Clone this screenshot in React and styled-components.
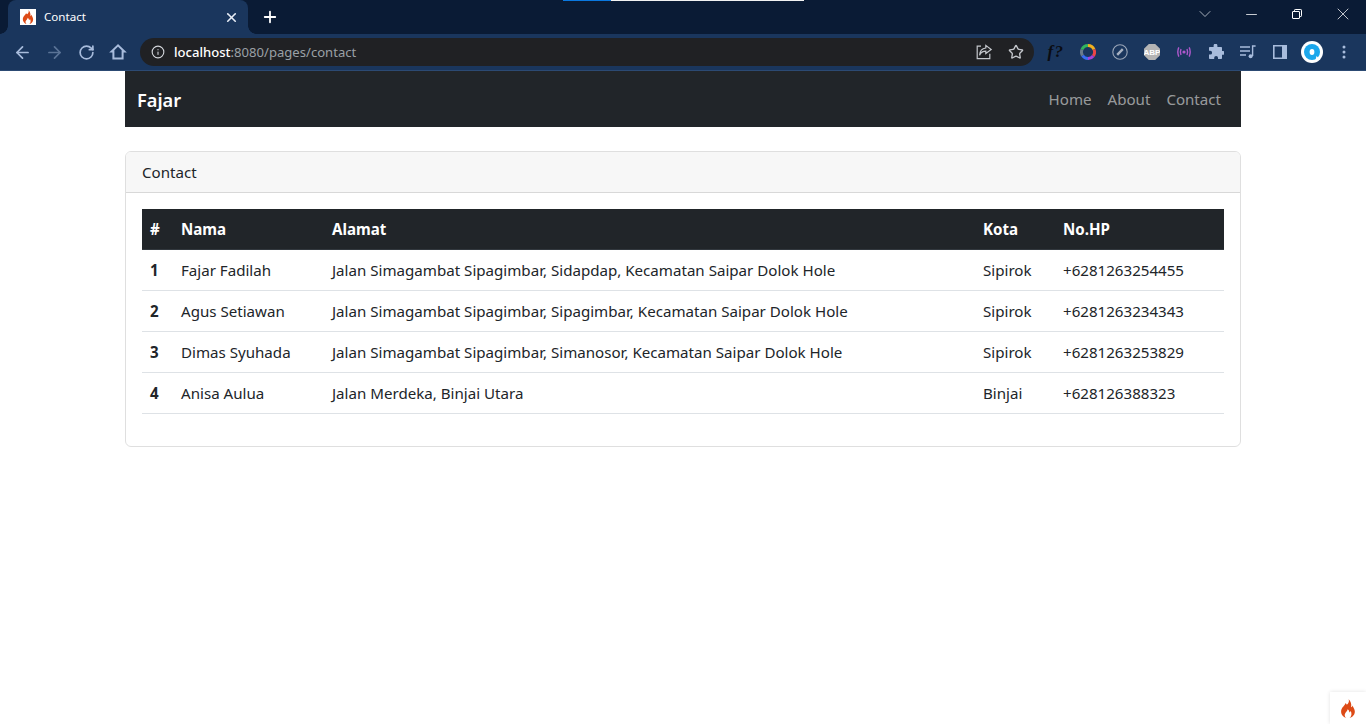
import React from "react";
import styled, { createGlobalStyle } from "styled-components";
import { ArrowLeft, ArrowRight, RotateCw, Info, Star, X, Plus, ChevronDown, Minus } from "lucide-react";

const Global = createGlobalStyle`
  html, body { margin: 0; padding: 0; background: #fff; }
  body { font-family: "Noto Sans", "Open Sans", sans-serif; color: #212529; }
  * { box-sizing: border-box; }
`;

const Shell = styled.div`
  position: relative;
  width: 1366px;
  height: 724px;
  overflow: hidden;
  background: #fff;
`;

const LoadStrip = styled.div`
  position: absolute;
  left: 563px;
  top: 0;
  display: flex;
  height: 1px;
  z-index: 2;
`;
const LoadPart = styled.div`
  width: ${(p) => p.$w}px;
  background: ${(p) => p.$c};
`;

const TabStrip = styled.div`
  display: flex;
  align-items: stretch;
  height: 34px;
  background: #0a1b35;
  padding-left: 8px;
`;

const Tab = styled.div`
  position: relative;
  display: flex;
  align-items: center;
  width: 240px;
  padding: 0 9px 0 12px;
  background: #1a365d;
  border-radius: 8px 8px 0 0;
  &::before, &::after {
    content: "";
    position: absolute;
    bottom: 0;
    width: 8px;
    height: 8px;
  }
  &::before { left: -8px; background: radial-gradient(circle at 0 0, #0a1b35 7.5px, #1a365d 8px); }
  &::after { right: -8px; background: radial-gradient(circle at 100% 0, #0a1b35 7.5px, #1a365d 8px); }
`;

const Favicon = styled.span`
  display: flex;
  align-items: center;
  justify-content: center;
  width: 16px;
  height: 16px;
  background: #fff;
  margin-right: 8px;
`;

const TabTitle = styled.span`
  flex: 1;
  color: #fff;
  font-size: 11.6px;
  line-height: 15px;
  margin-top: -1px;
`;

const TabClose = styled.span`
  display: flex;
  color: #e8eef7;
`;

const NewTab = styled.span`
  display: flex;
  align-items: center;
  justify-content: center;
  width: 28px;
  margin-left: 8px;
  color: #fff;
`;

const WindowControls = styled.div`
  margin-left: auto;
  display: flex;
  align-items: flex-start;
`;

const WindowButton = styled.span`
  display: flex;
  align-items: center;
  justify-content: center;
  width: 46px;
  height: 28px;
  color: #fff;
`;

const Toolbar = styled.div`
  display: flex;
  align-items: flex-start;
  height: 37px;
  padding: 4px 6px 0;
  background: #1a365d;
  border-bottom: 1px solid #2c4a73;
`;

const ToolButton = styled.span`
  display: flex;
  align-items: center;
  justify-content: center;
  flex: none;
  width: 32px;
  height: 28px;
  color: ${(p) => p.$c || "#a8bcdc"};
`;

const Omnibox = styled.div`
  flex: 1;
  display: flex;
  align-items: center;
  height: 28px;
  margin: 0 6px;
  padding-left: 11px;
  padding-right: 2px;
  border-radius: 14px;
  background: #202124;
  color: #d4d7dc;
`;

const Url = styled.span`
  flex: 1;
  margin-left: 9px;
  font-size: 13.1px;
  color: #9aa0a6;
  white-space: nowrap;
`;

const Host = styled.span`
  color: #fff;
  font-weight: 500;
`;

const FxMark = styled.span`
  font-family: "Liberation Serif", serif;
  font-style: italic;
  font-weight: 700;
  font-size: 17px;
  letter-spacing: 1.5px;
  color: #0a0c12;
`;

const Container = styled.main`
  width: 1116px;
  margin: 0 auto;
`;

const Navbar = styled.nav`
  display: flex;
  align-items: center;
  justify-content: space-between;
  height: 56px;
  padding: 0 12px;
  background: #212529;
`;

const Brand = styled.span`
  font-size: 18.2px;
  line-height: 28px;
  padding-top: 2px;
  font-weight: 600;
  color: #fff;
`;

const NavLinks = styled.div`
  display: flex;
`;

const NavLink = styled.span`
  padding: 0 8px;
  font-size: 15.1px;
  line-height: 24px;
  color: rgba(255, 255, 255, 0.55);
`;

const Card = styled.section`
  margin-top: 24px;
  border: 1px solid rgba(0, 0, 0, 0.125);
  border-radius: 6px;
  overflow: hidden;
`;

const CardHeader = styled.header`
  height: 41px;
  padding: 8px 16px;
  font-size: 15.1px;
  line-height: 24px;
  background: #f7f7f7;
  border-bottom: 1px solid rgba(0, 0, 0, 0.125);
`;

const CardBody = styled.div`
  padding: 16px 16px 32px;
`;

const Table = styled.table`
  width: 100%;
  border-collapse: separate;
  border-spacing: 0;
  table-layout: fixed;
  font-size: 15.12px;
`;

const HeadCell = styled.th`
  width: ${(p) => p.$w}px;
  height: 41px;
  padding: 8px;
  text-align: left;
  line-height: 24px;
  font-weight: 700;
  color: #fff;
  background: #212529;
  border-bottom: 1px solid #32383e;
`;

const RowHead = styled.th`
  height: 41px;
  padding: 8px;
  text-align: left;
  line-height: 24px;
  font-weight: 700;
  border-bottom: 1px solid #dee2e6;
`;

const Cell = styled.td`
  height: 41px;
  padding: 8px;
  line-height: 24px;
  white-space: nowrap;
  border-bottom: 1px solid #dee2e6;
`;

const DebugBadge = styled.div`
  position: absolute;
  right: 0;
  bottom: 0;
  width: 36px;
  height: 32px;
  display: flex;
  align-items: flex-start;
  justify-content: center;
  padding-top: 7px;
  background: #fff;
  box-shadow: 0 0 4px rgba(0, 0, 0, 0.12);
`;

const Flame = ({ size = 16 }) => (
  <svg width={size} height={size * 1.2} viewBox="0 0 16 19.2">
    <path
      fillRule="evenodd"
      fill="#dd4a16"
      d="M8.6 0.2 C9.6 2.6 8.4 4.2 6.8 5.8 C6.6 4.9 6.1 4.4 5.2 4.2 C5.6 6.2 1.4 8 1.1 12 C0.9 15.4 3.2 18 6.2 19 C4.6 17.6 4.2 15.8 5.4 14 C6.3 12.8 7.4 11.9 7.7 10.3 C9 11.2 9.4 12.4 9.2 13.4 C10 13.2 10.5 12.6 10.7 12 C11.9 14.4 11.8 17.2 9.6 19 C13 18 15.1 15.3 14.8 12 C14.5 9.8 13.3 8.4 12.6 6.4 C12.3 7.4 11.9 7.9 11.1 8.2 C11.8 5 10.6 1.8 8.6 0.2 Z"
    />
  </svg>
);

const HomeIcon = () => (
  <svg width="18" height="18" viewBox="0 0 18 18" fill="none" stroke="#a8bcdc" strokeWidth="2">
    <path d="M9 2.4L2.6 8.6H4.4V15.6H13.6V8.6H15.4Z" strokeLinejoin="miter" />
  </svg>
);

const ShareIcon = () => (
  <svg width="18" height="18" viewBox="0 0 18 18" fill="none" stroke="#c4c7cc" strokeWidth="1.2">
    <path d="M6 3.2H2.2V15.7H14.8V10.8" />
    <path d="M10.8 2.4L16.2 6.6L10.8 10.6V8.2C7.8 8.2 5.8 9.4 4.6 12.2C4.8 8.4 7 5.4 10.8 5Z" />
  </svg>
);

const WheelIcon = () => (
  <svg width="16" height="16" viewBox="0 0 16 16" fill="none" strokeWidth="3">
    <path d="M8 1.5A6.5 6.5 0 0 1 14 5.5" stroke="#f2b01e" />
    <path d="M14 5.5A6.5 6.5 0 0 1 13.2 12" stroke="#ec4646" />
    <path d="M13.2 12A6.5 6.5 0 0 1 8 14.5" stroke="#a541d8" />
    <path d="M8 14.5A6.5 6.5 0 0 1 2.5 11.5" stroke="#3a6cf2" />
    <path d="M2.5 11.5A6.5 6.5 0 0 1 2 5.5" stroke="#6a7b8c" />
    <path d="M2 5.5A6.5 6.5 0 0 1 8 1.5" stroke="#32b45e" />
  </svg>
);

const CompassIcon = () => (
  <svg width="16" height="16" viewBox="0 0 16 16" fill="none">
    <circle cx="8" cy="8" r="7.2" stroke="#9aa6b8" strokeWidth="1.1" />
    <path d="M5.2 10.8L10.8 5.2" stroke="#a8b2c2" strokeWidth="2.4" />
  </svg>
);

const AbpIcon = () => (
  <svg width="16" height="16" viewBox="0 0 16 16">
    <path fill="#b4b4b4" d="M4.8 0H11.2L16 4.8V11.2L11.2 16H4.8L0 11.2V4.8Z" />
    <text x="8" y="10.9" textAnchor="middle" fontSize="8" fontWeight="700" fontFamily="Liberation Sans, sans-serif" fill="#fff">ABP</text>
  </svg>
);

const RadioIcon = () => (
  <svg width="16" height="12" viewBox="0 0 16 12" fill="none" stroke="#ae58cc" strokeWidth="1.4">
    <circle cx="8" cy="6" r="1.6" fill="#ae58cc" stroke="none" />
    <path d="M5 3Q3.8 6 5 9" />
    <path d="M11 3Q12.2 6 11 9" />
    <path d="M2.8 1.4Q0.8 6 2.8 10.6" />
    <path d="M13.2 1.4Q15.2 6 13.2 10.6" />
  </svg>
);

const PuzzleIcon = () => (
  <svg width="16" height="16" viewBox="0 0 16 16">
    <path fill="#a8bcdc" d="M5.6 1.6A1.9 1.9 0 0 1 9.4 1.6V3H13.2A0.8 0.8 0 0 1 14 3.8V7H15A1.9 1.9 0 0 1 15 10.8H14V14.2A0.8 0.8 0 0 1 13.2 15H10V13.8A1.9 1.9 0 0 0 6.2 13.8V15H1.8A0.8 0.8 0 0 1 1 14.2V10.6H2.2A1.9 1.9 0 0 0 2.2 6.8H1V3.8A0.8 0.8 0 0 1 1.8 3H5.6Z" />
  </svg>
);

const QueueIcon = () => (
  <svg width="16" height="14" viewBox="0 0 16 14" fill="none" stroke="#a8bcdc" strokeWidth="1.4">
    <path d="M0 2H10M0 6H10M0 10H6" />
    <path d="M12.6 11V1H15.6" />
    <circle cx="10.6" cy="11.2" r="2" fill="#a8bcdc" stroke="none" />
  </svg>
);

const SidebarIcon = () => (
  <svg width="14" height="14" viewBox="0 0 14 14">
    <path fill="#a8bcdc" fillRule="evenodd" d="M0 0H14V14H0ZM1.6 1.6V12.4H9V1.6Z" />
  </svg>
);

const AvatarIcon = () => (
  <svg width="22" height="22" viewBox="0 0 22 22">
    <circle cx="11" cy="11" r="11" fill="#fff" />
    <circle cx="11" cy="11" r="8" fill="#1ba7ec" />
    <ellipse cx="11" cy="11" rx="2.4" ry="3" fill="#fff" />
    <path d="M15.5 15L19.5 19H14.5Z" fill="#fff" />
  </svg>
);

const DotsIcon = () => (
  <svg width="4" height="14" viewBox="0 0 4 14" fill="#a8bcdc">
    <circle cx="2" cy="2" r="1.5" />
    <circle cx="2" cy="7" r="1.5" />
    <circle cx="2" cy="12" r="1.5" />
  </svg>
);

const RestoreIcon = () => (
  <svg width="10" height="10" viewBox="0 0 10 10" fill="none" stroke="#fff" strokeWidth="1">
    <rect x="0.5" y="2.5" width="7" height="7" rx="0.5" />
    <path d="M2.5 2.5V1.2Q2.5 0.5 3.2 0.5H8.8Q9.5 0.5 9.5 1.2V6.8Q9.5 7.5 8.8 7.5H7.5" />
  </svg>
);

const rows = [
  ["1", "Fajar Fadilah", "Jalan Simagambat Sipagimbar, Sidapdap, Kecamatan Saipar Dolok Hole", "Sipirok", "+6281263254455"],
  ["2", "Agus Setiawan", "Jalan Simagambat Sipagimbar, Sipagimbar, Kecamatan Saipar Dolok Hole", "Sipirok", "+6281263234343"],
  ["3", "Dimas Syuhada", "Jalan Simagambat Sipagimbar, Simanosor, Kecamatan Saipar Dolok Hole", "Sipirok", "+6281263253829"],
  ["4", "Anisa Aulua", "Jalan Merdeka, Binjai Utara", "Binjai", "+628126388323"],
];

export default function App() {
  return (
    <Shell>
      <Global />
      <LoadStrip>
        <LoadPart $w={48} $c="#0a78e0" />
        <LoadPart $w={193} $c="#f2f2f2" />
      </LoadStrip>
      <TabStrip>
        <Tab>
          <Favicon><Flame size={12} /></Favicon>
          <TabTitle>Contact</TabTitle>
          <TabClose><X size={15} strokeWidth={2.6} /></TabClose>
        </Tab>
        <NewTab><Plus size={18} strokeWidth={2.4} /></NewTab>
        <WindowControls>
          <WindowButton><ChevronDown size={20} strokeWidth={0.9} color="#d8dde6" /></WindowButton>
          <WindowButton><Minus size={17} strokeWidth={1.1} /></WindowButton>
          <WindowButton><RestoreIcon /></WindowButton>
          <WindowButton><X size={20} strokeWidth={0.9} /></WindowButton>
        </WindowControls>
      </TabStrip>
      <Toolbar>
        <ToolButton><ArrowLeft size={19} strokeWidth={2.2} /></ToolButton>
        <ToolButton $c="#5a7396"><ArrowRight size={19} strokeWidth={2.2} /></ToolButton>
        <ToolButton><RotateCw size={17} strokeWidth={2.4} /></ToolButton>
        <ToolButton><HomeIcon /></ToolButton>
        <Omnibox>
          <Info size={14} strokeWidth={1.9} />
          <Url><Host>localhost</Host>:8080/pages/contact</Url>
          <ToolButton $c="#c4c7cc"><ShareIcon /></ToolButton>
          <ToolButton $c="#c4c7cc"><Star size={16} strokeWidth={2} /></ToolButton>
        </Omnibox>
        <ToolButton><FxMark>f?</FxMark></ToolButton>
        <ToolButton><WheelIcon /></ToolButton>
        <ToolButton><CompassIcon /></ToolButton>
        <ToolButton><AbpIcon /></ToolButton>
        <ToolButton><RadioIcon /></ToolButton>
        <ToolButton><PuzzleIcon /></ToolButton>
        <ToolButton><QueueIcon /></ToolButton>
        <ToolButton><SidebarIcon /></ToolButton>
        <ToolButton><AvatarIcon /></ToolButton>
        <ToolButton><DotsIcon /></ToolButton>
      </Toolbar>
      <Container>
        <Navbar>
          <Brand>Fajar</Brand>
          <NavLinks>
            <NavLink>Home</NavLink>
            <NavLink>About</NavLink>
            <NavLink>Contact</NavLink>
          </NavLinks>
        </Navbar>
        <Card>
          <CardHeader>Contact</CardHeader>
          <CardBody>
            <Table>
              <thead>
                <tr>
                  <HeadCell $w={31}>#</HeadCell>
                  <HeadCell $w={151}>Nama</HeadCell>
                  <HeadCell $w={651}>Alamat</HeadCell>
                  <HeadCell $w={80}>Kota</HeadCell>
                  <HeadCell $w={169}>No.HP</HeadCell>
                </tr>
              </thead>
              <tbody>
                {rows.map((r) => (
                  <tr key={r[0]}>
                    <RowHead>{r[0]}</RowHead>
                    <Cell>{r[1]}</Cell>
                    <Cell>{r[2]}</Cell>
                    <Cell>{r[3]}</Cell>
                    <Cell>{r[4]}</Cell>
                  </tr>
                ))}
              </tbody>
            </Table>
          </CardBody>
        </Card>
      </Container>
      <DebugBadge><Flame size={16} /></DebugBadge>
    </Shell>
  );
}
